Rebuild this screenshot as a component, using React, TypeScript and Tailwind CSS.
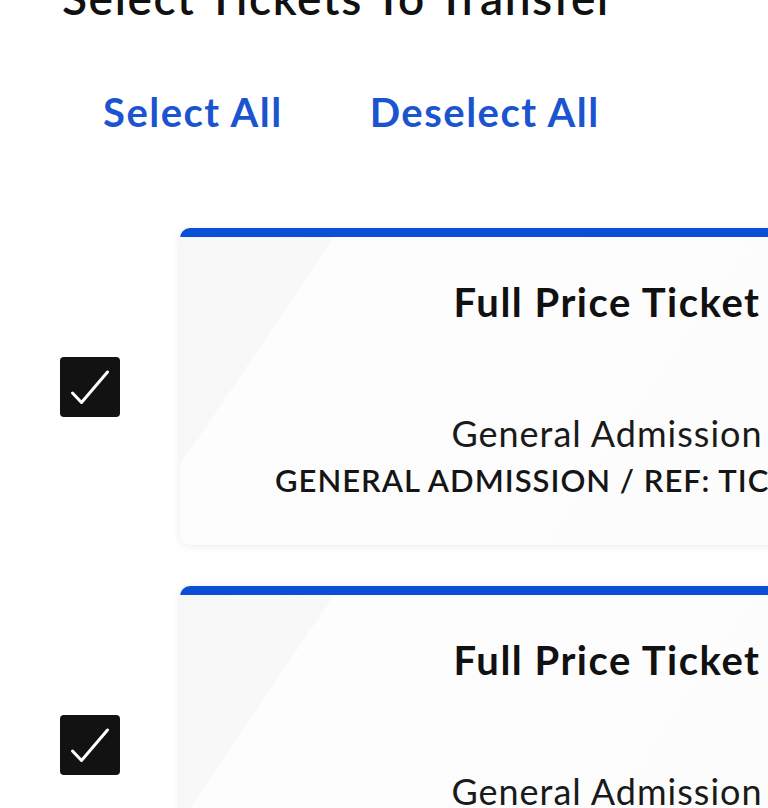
import React from "react";

function Check() {
  return (
    <div className="w-[60px] h-[60px] shrink-0 rounded-[4px] bg-[#121212] flex items-center justify-center">
      <svg width="60" height="60" viewBox="0 0 60 60" fill="none">
        <path d="M12.5 36 L21.5 45.5 L47.5 15" stroke="#fff" strokeWidth="3" strokeLinecap="round" strokeLinejoin="round" />
      </svg>
    </div>
  );
}

function Card() {
  return (
    <div className="w-[854px] shrink-0 rounded-[10px] overflow-hidden shadow-[0_1px_8px_rgba(0,0,0,0.09)] bg-[linear-gradient(124deg,#f7f7f8_0%,#f8f8f9_15%,#fdfdfd_15%,#fcfcfc_100%)]">
      <div className="h-[9px] bg-[#0b4fd7]" />
      <div className="h-[308px] flex flex-col pt-[41px]">
        <div className="text-center text-[40px] leading-[48px] font-bold text-[#111] tracking-[1.5px]">Full Price Ticket</div>
        <div className="mt-[86px] text-center text-[36px] leading-[43px] font-normal text-[#1a1a1a] tracking-[1px]">General Admission</div>
        <div className="mt-[7px] pl-[95px] whitespace-nowrap text-[31px] leading-[37px] font-semibold text-[#151515] tracking-[1px]">GENERAL ADMISSION / REF: TICKET</div>
      </div>
    </div>
  );
}

export default function App() {
  return (
    <div className="w-[768px] h-[808px] overflow-hidden bg-white" style={{ fontFamily: "Lato, 'Noto Sans', sans-serif" }}>
      <div className="mt-[-26px] pl-[62px] text-[46px] leading-[48px] font-semibold text-[#111] whitespace-nowrap tracking-[1.6px]">Select Tickets To Transfer</div>
      <div className="mt-[66px] pl-[103px] flex gap-[87px] text-[40px] leading-[48px] font-bold text-[#1a55cf] tracking-[1.5px]">
        <span>Select All</span>
        <span>Deselect All</span>
      </div>
      <div className="mt-[92px] flex flex-col gap-[41px]">
        <div className="flex items-center pl-[60px] gap-[60px]">
          <Check />
          <Card />
        </div>
        <div className="flex items-center pl-[60px] gap-[60px]">
          <Check />
          <Card />
        </div>
      </div>
    </div>
  );
}
